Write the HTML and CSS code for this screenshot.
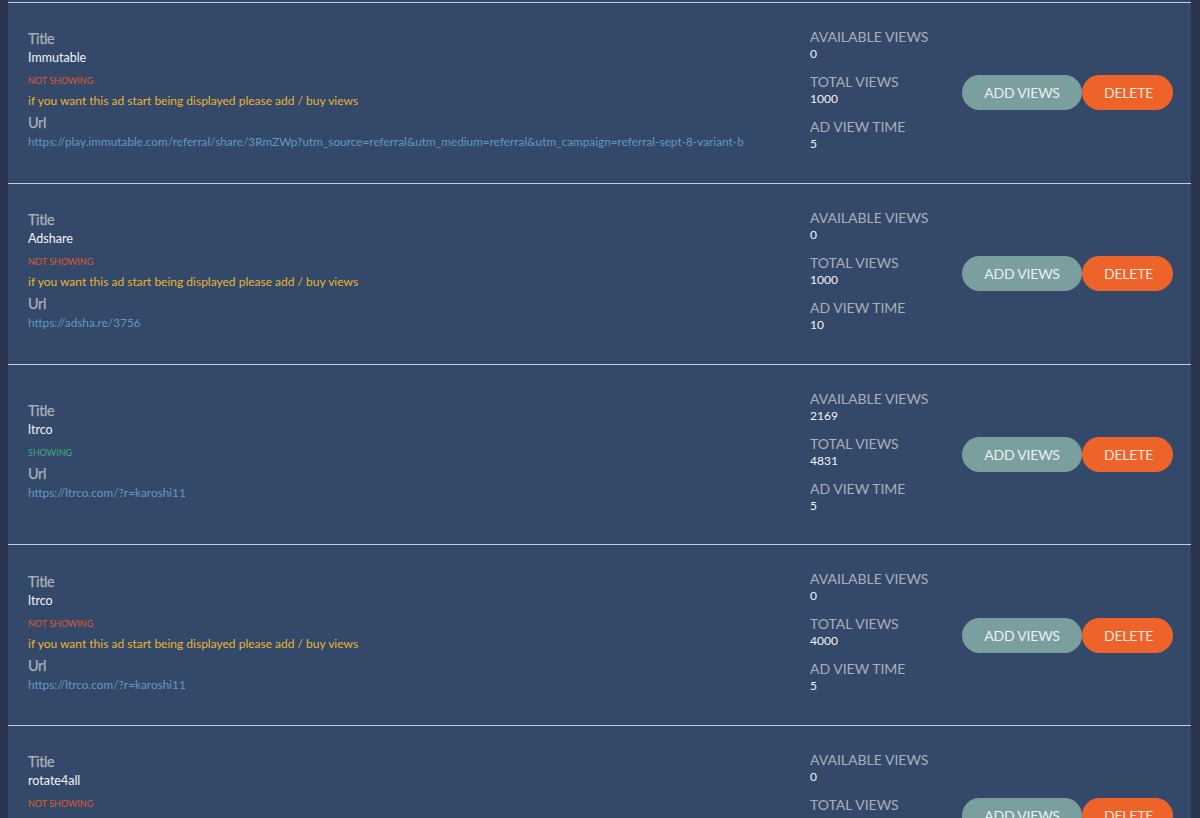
FILE: index.html
```html
<!DOCTYPE html>
<html lang="en">
<head>
<meta charset="utf-8">
<title>My Ads</title>
<link rel="stylesheet" href="styles.css">
</head>
<body>
<div class="list">
  <div class="card">
    <div class="info">
      <div class="label">Title</div>
      <div class="value">Immutable</div>
      <div class="status off">NOT SHOWING</div>
      <div class="warning">if you want this ad start being displayed please add / buy views</div>
      <div class="label url-label">Url</div>
      <div class="url">https://play.immutable.com/referral/share/3RmZWp?utm_source=referral&amp;utm_medium=referral&amp;utm_campaign=referral-sept-8-variant-b</div>
    </div>
    <div class="stats">
      <div class="stat"><div class="stat-label">AVAILABLE VIEWS</div><div class="stat-value">0</div></div>
      <div class="stat"><div class="stat-label">TOTAL VIEWS</div><div class="stat-value">1000</div></div>
      <div class="stat"><div class="stat-label">AD VIEW TIME</div><div class="stat-value">5</div></div>
    </div>
    <div class="actions">
      <button class="btn add">ADD VIEWS</button><button class="btn del">DELETE</button>
    </div>
  </div>

  <div class="card">
    <div class="info">
      <div class="label">Title</div>
      <div class="value">Adshare</div>
      <div class="status off">NOT SHOWING</div>
      <div class="warning">if you want this ad start being displayed please add / buy views</div>
      <div class="label url-label">Url</div>
      <div class="url">https://adsha.re/3756</div>
    </div>
    <div class="stats">
      <div class="stat"><div class="stat-label">AVAILABLE VIEWS</div><div class="stat-value">0</div></div>
      <div class="stat"><div class="stat-label">TOTAL VIEWS</div><div class="stat-value">1000</div></div>
      <div class="stat"><div class="stat-label">AD VIEW TIME</div><div class="stat-value">10</div></div>
    </div>
    <div class="actions">
      <button class="btn add">ADD VIEWS</button><button class="btn del">DELETE</button>
    </div>
  </div>

  <div class="card">
    <div class="info">
      <div class="label">Title</div>
      <div class="value">ltrco</div>
      <div class="status on">SHOWING</div>
      <div class="label url-label">Url</div>
      <div class="url">https://ltrco.com/?r=karoshi11</div>
    </div>
    <div class="stats">
      <div class="stat"><div class="stat-label">AVAILABLE VIEWS</div><div class="stat-value">2169</div></div>
      <div class="stat"><div class="stat-label">TOTAL VIEWS</div><div class="stat-value">4831</div></div>
      <div class="stat"><div class="stat-label">AD VIEW TIME</div><div class="stat-value">5</div></div>
    </div>
    <div class="actions">
      <button class="btn add">ADD VIEWS</button><button class="btn del">DELETE</button>
    </div>
  </div>

  <div class="card">
    <div class="info">
      <div class="label">Title</div>
      <div class="value">ltrco</div>
      <div class="status off">NOT SHOWING</div>
      <div class="warning">if you want this ad start being displayed please add / buy views</div>
      <div class="label url-label">Url</div>
      <div class="url">https://ltrco.com/?r=karoshi11</div>
    </div>
    <div class="stats">
      <div class="stat"><div class="stat-label">AVAILABLE VIEWS</div><div class="stat-value">0</div></div>
      <div class="stat"><div class="stat-label">TOTAL VIEWS</div><div class="stat-value">4000</div></div>
      <div class="stat"><div class="stat-label">AD VIEW TIME</div><div class="stat-value">5</div></div>
    </div>
    <div class="actions">
      <button class="btn add">ADD VIEWS</button><button class="btn del">DELETE</button>
    </div>
  </div>

  <div class="card">
    <div class="info">
      <div class="label">Title</div>
      <div class="value">rotate4all</div>
      <div class="status off">NOT SHOWING</div>
      <div class="warning">if you want this ad start being displayed please add / buy views</div>
      <div class="label url-label">Url</div>
      <div class="url">https://rotate4all.com/ptp/promote-1234</div>
    </div>
    <div class="stats">
      <div class="stat"><div class="stat-label">AVAILABLE VIEWS</div><div class="stat-value">0</div></div>
      <div class="stat"><div class="stat-label">TOTAL VIEWS</div><div class="stat-value">1000</div></div>
      <div class="stat"><div class="stat-label">AD VIEW TIME</div><div class="stat-value">5</div></div>
    </div>
    <div class="actions">
      <button class="btn add">ADD VIEWS</button><button class="btn del">DELETE</button>
    </div>
  </div>
</div>
</body>
</html>
```

FILE: styles.css
```css
html, body {
  margin: 0;
  padding: 0;
  background: #2b3450;
  height: 100%;
  overflow: hidden;
}

body {
  font-family: Lato, "Open Sans", sans-serif;
}

.list {
  margin: 0 9px 0 8px;
  padding-top: 2px;
  background: #344869;
}

.card {
  box-sizing: border-box;
  height: 180.75px;
  border-top: 1px solid #c9ced6;
  display: flex;
  align-items: center;
  padding: 0 18px 0 20px;
}

.info {
  flex: 1;
  min-width: 0;
  padding-bottom: 4px;
}

.label {
  font-size: 14.5px;
  line-height: 18px;
  font-weight: 400;
  color: #aab1bc;
  letter-spacing: -0.4px;
  -webkit-text-stroke: 0.25px #aab1bc;
}

.url-label {
  margin-top: 5px;
}

.value {
  font-size: 12.5px;
  line-height: 19px;
  color: #f1f3f6;
}

.status {
  font-size: 9px;
  line-height: 14px;
  margin-top: 7px;
}

.status.off {
  color: #de5a2c;
}

.status.on {
  color: #3fae7b;
}

.warning {
  font-size: 12px;
  line-height: 16px;
  margin-top: 5px;
  color: #e7b531;
}

.url {
  font-size: 11.8px;
  line-height: 19px;
  color: #5d9bc2;
  white-space: nowrap;
}

.stats {
  width: 152px;
  align-self: flex-start;
  margin-top: 25px;
}

.stat + .stat {
  margin-top: 11px;
}

.stat-label {
  font-size: 14px;
  line-height: 17px;
  color: #a9afba;
  letter-spacing: 0;
}

.stat-value {
  font-size: 12px;
  line-height: 17px;
  color: #f1f3f6;
}

.actions {
  display: flex;
}

.btn {
  height: 35px;
  border: none;
  border-radius: 18px;
  font-family: Lato, "Open Sans", sans-serif;
  font-size: 14px;
  padding: 0 22px;
  cursor: pointer;
  letter-spacing: -0.2px;
}

.btn.add {
  width: 120px;
  background: #7b9e9f;
  color: #e9f0f0;
}

.btn.del {
  width: 91px;
  background: #ee6329;
  color: #fde9df;
}
```
